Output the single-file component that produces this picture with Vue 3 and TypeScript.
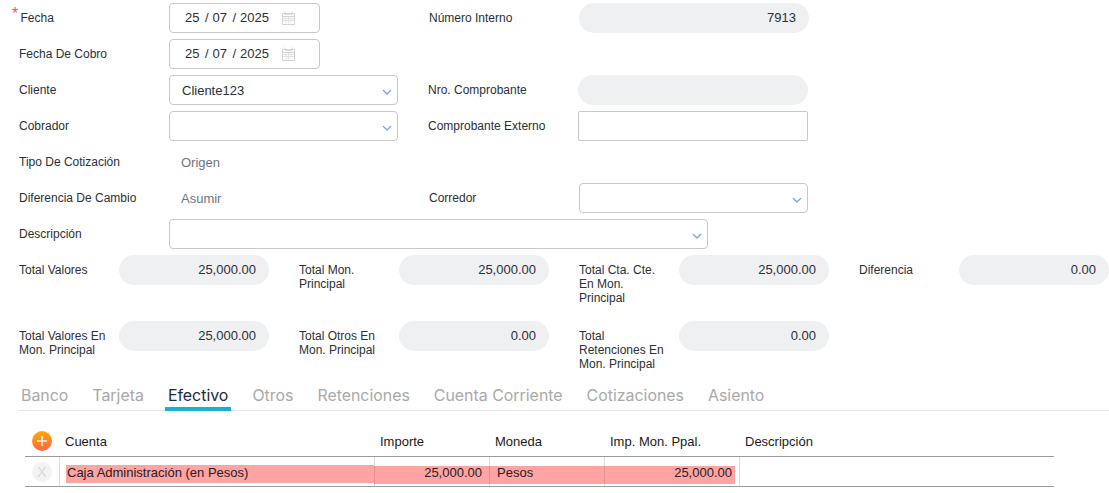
<script setup lang="ts">
const tabs: string[] = ['Banco', 'Tarjeta', 'Efectivo', 'Otros', 'Retenciones', 'Cuenta Corriente', 'Cotizaciones', 'Asiento']
const totals: { label: string; value: string }[][] = [
  [
    { label: 'Total Valores', value: '25,000.00' },
    { label: 'Total Mon. Principal', value: '25,000.00' },
    { label: 'Total Cta. Cte. En Mon. Principal', value: '25,000.00' },
    { label: 'Diferencia', value: '0.00' },
  ],
  [
    { label: 'Total Valores En Mon. Principal', value: '25,000.00' },
    { label: 'Total Otros En Mon. Principal', value: '0.00' },
    { label: 'Total Retenciones En Mon. Principal', value: '0.00' },
  ],
]
</script>

<template>
  <div class="page">
    <div class="row">
      <label class="label req">Fecha</label>
      <div class="box date">
        <span class="date-text"><span class="seg">25</span><span class="sl">/</span><span class="seg">07</span><span class="sl">/</span><span>2025</span></span>
        <svg class="cal" width="13" height="14" viewBox="0 0 13 14"><path d="M3 3.5h7M4 5.5v7M6.5 5.5v7M9 5.5v7M1 7.5h11M1 9.5h11" fill="none" stroke="#dcdcdc" stroke-width="0.8"/><path d="M.5 2.5h12v11H.5zM.5 5.5h12M3 .5v3M10 .5v3" fill="none" stroke="#cdcdcd" stroke-width="0.9"/></svg>
      </div>
      <label class="label right">Número Interno</label>
      <div class="pill wide">7913</div>
    </div>
    <div class="row">
      <label class="label">Fecha De Cobro</label>
      <div class="box date">
        <span class="date-text"><span class="seg">25</span><span class="sl">/</span><span class="seg">07</span><span class="sl">/</span><span>2025</span></span>
        <svg class="cal" width="13" height="14" viewBox="0 0 13 14"><path d="M3 3.5h7M4 5.5v7M6.5 5.5v7M9 5.5v7M1 7.5h11M1 9.5h11" fill="none" stroke="#dcdcdc" stroke-width="0.8"/><path d="M.5 2.5h12v11H.5zM.5 5.5h12M3 .5v3M10 .5v3" fill="none" stroke="#cdcdcd" stroke-width="0.9"/></svg>
      </div>
    </div>
    <div class="row">
      <label class="label">Cliente</label>
      <div class="box select">
        <span class="sel-text">Cliente123</span>
        <svg class="chev" width="10" height="6" viewBox="0 0 10 6"><path d="M1 1l4 4 4-4" fill="none" stroke="#7aa7d9" stroke-width="1.3"/></svg>
      </div>
      <label class="label right shift-r">Nro. Comprobante</label>
      <div class="pill wide"></div>
    </div>
    <div class="row">
      <label class="label">Cobrador</label>
      <div class="box select">
        <svg class="chev" width="10" height="6" viewBox="0 0 10 6"><path d="M1 1l4 4 4-4" fill="none" stroke="#7aa7d9" stroke-width="1.3"/></svg>
      </div>
      <label class="label right shift-r">Comprobante Externo</label>
      <div class="box plain"></div>
    </div>
    <div class="row">
      <label class="label">Tipo De Cotización</label>
      <span class="static">Origen</span>
    </div>
    <div class="row">
      <label class="label">Diferencia De Cambio</label>
      <span class="static narrow">Asumir</span>
      <label class="label right">Corredor</label>
      <div class="box corredor">
        <svg class="chev" width="10" height="6" viewBox="0 0 10 6"><path d="M1 1l4 4 4-4" fill="none" stroke="#7aa7d9" stroke-width="1.3"/></svg>
      </div>
    </div>
    <div class="row">
      <label class="label">Descripción</label>
      <div class="box desc">
        <svg class="chev" width="10" height="6" viewBox="0 0 10 6"><path d="M1 1l4 4 4-4" fill="none" stroke="#7aa7d9" stroke-width="1.3"/></svg>
      </div>
    </div>

    <div v-for="(line, i) in totals" :key="i" class="totals">
      <div v-for="t in line" :key="t.label" class="total">
        <label class="total-label">{{ t.label }}</label>
        <div class="pill total-pill">{{ t.value }}</div>
      </div>
    </div>

    <nav class="tabs">
      <a v-for="t in tabs" :key="t" class="tab" :class="{ active: t === 'Efectivo' }">{{ t }}</a>
    </nav>

    <div class="grid">
      <div class="cols head">
        <div class="add"><span class="add-btn">
          <svg width="10" height="10" viewBox="0 0 10 10"><path d="M5 .5v9M.5 5h9" stroke="#fff" stroke-width="1.6" stroke-linecap="round" opacity="0.9"/></svg>
        </span></div>
        <div class="th">Cuenta</div>
        <div class="th">Importe</div>
        <div class="th">Moneda</div>
        <div class="th">Imp. Mon. Ppal.</div>
        <div class="th">Descripción</div>
      </div>
      <div class="cols body">
        <div class="add"><span class="del">X</span></div>
        <div class="td first"><span class="fill">Caja Administración (en Pesos)</span></div>
        <div class="td low"><span class="fill num">25,000.00</span></div>
        <div class="td low"><span class="fill txt">Pesos</span></div>
        <div class="td low last"><span class="fill num">25,000.00</span></div>
        <div class="td"></div>
      </div>
    </div>
  </div>
</template>

<style>
html, body { margin: 0; background: #fff; }
</style>

<style scoped>
.page {
  width: 1109px;
  height: 493px;
  overflow: hidden;
  padding: 3px 0 0 19px;
  box-sizing: border-box;
  font-family: "Liberation Sans", Arial, sans-serif;
  font-size: 12px;
  color: #2b2f36;
}
.row { display: flex; align-items: flex-start; height: 30px; margin-bottom: 6px; }
.label { width: 151px; flex: none; line-height: 30px; position: relative; }
.label.req { text-indent: 1.5px; }
.req::before { content: "*"; position: absolute; left: -7px; top: -4px; color: #ee5068; font-size: 16px; text-indent: 0; }
.right { width: 150px; }
.shift-r { margin-left: 30px; }
.box { border: 1px solid #c8c8c8; border-radius: 4px; box-sizing: border-box; height: 30px; background: #fff; position: relative; flex: none; }
.date { width: 151px; margin-left: -1px; margin-right: 109px; font-size: 13px; line-height: 27px; padding-left: 15px; }
.date-text { display: flex; }
.seg { width: 20px; }
.sl { width: 7.5px; }
.cal { position: absolute; left: 112px; top: 7px; }
.select { width: 229px; margin-left: -1px; }
.sel-text { position: absolute; left: 12px; top: 0; line-height: 29px; font-size: 13px; }
.chev { position: absolute; right: 5px; top: 13px; }
.plain { width: 230px; border-radius: 2px; }
.corredor { width: 229px; }
.desc { width: 539px; margin-left: -1px; }
.static { width: 109px; line-height: 31px; font-size: 13px; color: #6f747b; padding-left: 11px; box-sizing: border-box; flex: none; }
.narrow { margin-right: 150px; }
.pill { background: #eff0f2; border-radius: 15px; height: 30px; line-height: 30px; text-align: right; padding-right: 13px; box-sizing: border-box; font-size: 13px; flex: none; }
.wide { width: 230px; }
.totals { display: flex; height: 66px; }
.total { display: flex; width: 280px; flex: none; align-items: flex-start; }
.total-label { width: 100px; flex: none; line-height: 14px; padding: 8px 12px 0 0; box-sizing: border-box; }
.total-pill { width: 150px; }
.tabs { display: flex; gap: 24px; height: 26px; margin-top: -3px; border-bottom: 1px solid #e4e4e4; padding-left: 2px; }
.tab { font-family: "Inter", "Open Sans", sans-serif; font-size: 15.9px; color: #a9a9a9; line-height: 23px; padding: 0 3px; margin: 0 -3px; box-sizing: border-box; height: 27px; }
.tab.active { color: #1d2a3a; border-bottom: 4px solid #1ab0d3; }
.grid { margin: 17px 0 0 6px; width: 1029px; font-size: 13px; color: #222; }
.cols { display: grid; grid-template-columns: 34px 315px 115px 115px 135px 1fr; }
.head { height: 28px; border-bottom: 1px solid #9a9a9a; }
.th { line-height: 28px; padding-left: 6px; color: #1a1a1a; }
.add { display: flex; align-items: center; justify-content: center; }
.add-btn { width: 20px; height: 20px; border-radius: 50%; background: linear-gradient(170deg, #ffb000, #ff5f48); display: flex; align-items: center; justify-content: center; margin-top: -2px; }
.body { height: 29px; border-bottom: 1px solid #9a9a9a; }
.del { width: 20px; height: 20px; border-radius: 50%; background: #f3f3f3; color: #d8d8d8; font-size: 14px; line-height: 20px; text-align: center; }
.td { border-left: 1px solid #dcdcdc; display: flex; align-items: center; padding-top: 5px; box-sizing: border-box; }
.low { padding-top: 7px; }
.first { padding-left: 6px; }
.last { padding-right: 4px; }
.fill { background: #ffa3a3; display: block; width: 100%; height: 18px; line-height: 16px; padding: 0 1px; box-sizing: border-box; }
.low .fill { line-height: 14px; margin-left: -1px; width: calc(100% + 1px); box-shadow: inset 1px 0 0 rgba(0, 0, 0, 0.1); }
.num { text-align: right; padding-right: 7px; }
.txt { padding-left: 8px; }
.last .num { padding-right: 3px; }
</style>
